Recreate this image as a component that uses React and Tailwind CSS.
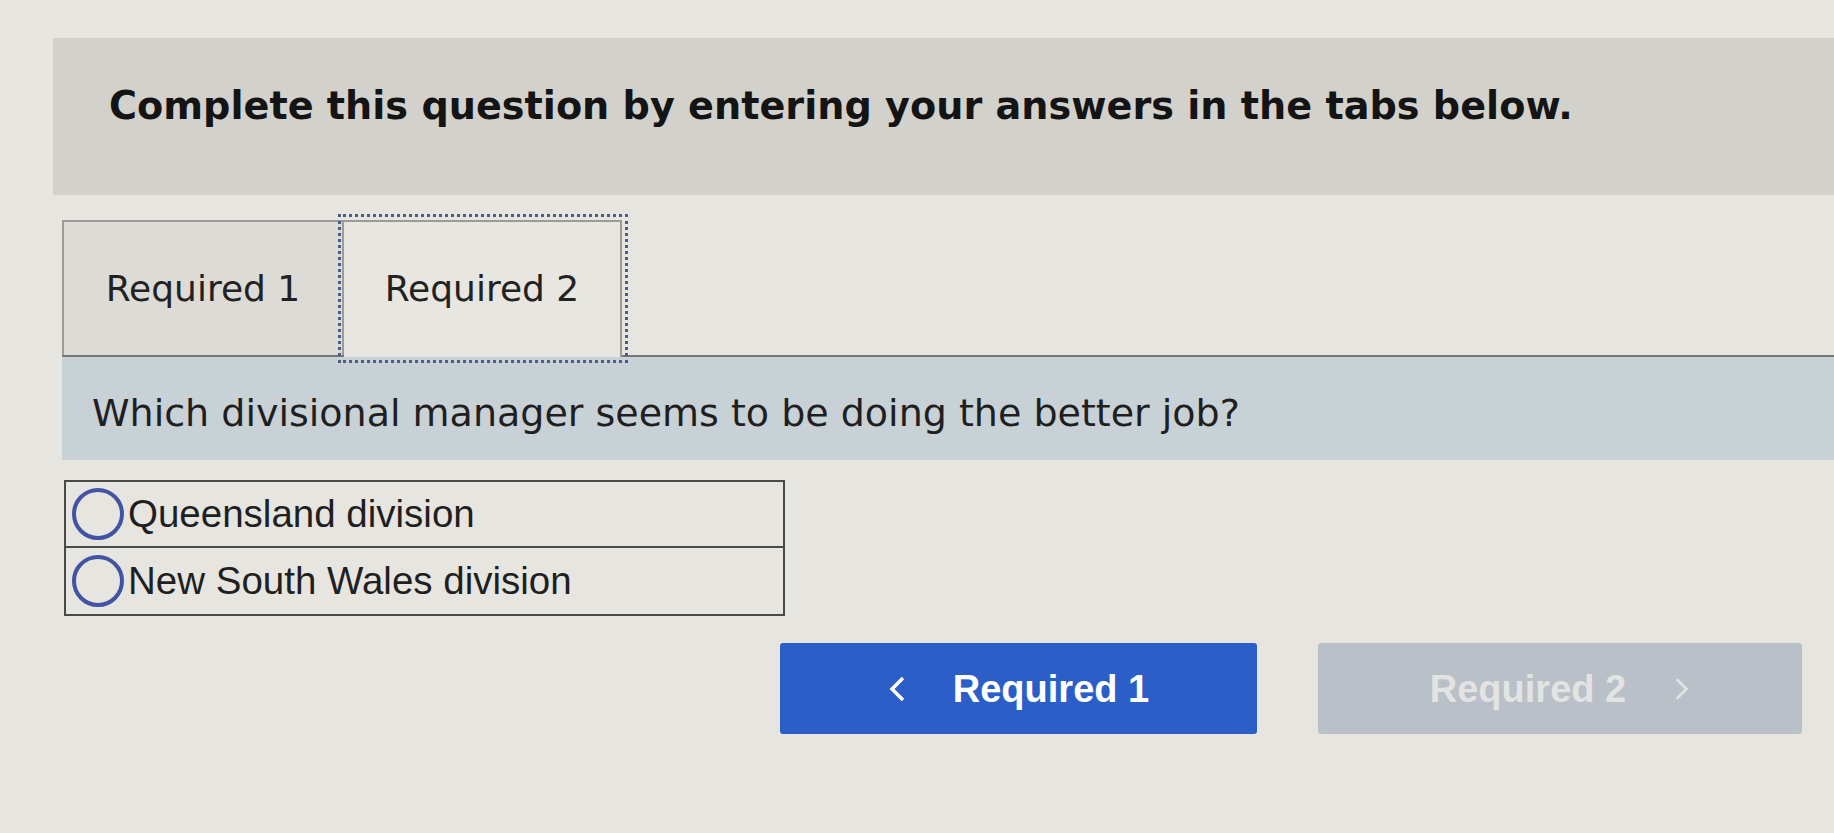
import React from "react";

const verdana = "font-['DejaVu_Sans',Verdana,sans-serif]";
const arial = "font-['Liberation_Sans',Arial,sans-serif]";

function Radio() {
    return (
        <span className="w-[52px] h-[52px] shrink-0 rounded-full border-[4px] border-[#4353a3]" />
    );
}

function Option({ label, last }) {
    return (
        <label
            className={[
                "flex items-center gap-[4px] h-[66px] pl-[6px]",
                last ? "" : "border-b-2 border-[#4a4a4a]",
            ].join(" ")}
        >
            <Radio />
            <span className={`${arial} text-[38.5px] leading-none text-[#1f1f1f]`}>
                {label}
            </span>
        </label>
    );
}

export default function App() {
    return (
        <div className="w-[1834px] h-[833px] overflow-hidden bg-[#e7e5e0] pt-[38px]">
            <div className="ml-[53px] h-[157px] bg-[#d2d1cc] pl-[56px] pt-[46px]">
                <h2
                    className={`${verdana} font-bold text-[38.2px] leading-[44px] text-[#141414] whitespace-nowrap`}
                >
                    Complete this question by entering your answers in the tabs below.
                </h2>
            </div>

            <div className="ml-[62px]">
                <div className="mt-[25px] flex border-b-2 border-[#777672]">
                    <button
                        className={`${verdana} w-[282px] h-[135px] border-2 border-b-0 border-[#9c9b97] bg-[#dddbd6] text-[36px] text-[#222]`}
                    >
                        Required 1
                    </button>
                    <button
                        className={`${verdana} w-[278px] h-[137px] -mb-[2px] border-2 border-l-0 border-b-0 border-[#9c9b97] bg-[#e8e6e1] text-[36px] text-[#222] outline-[3px] outline-dotted outline-[#4b5b8c] outline-offset-[3px] pb-[2px]`}
                    >
                        Required 2
                    </button>
                </div>

                <div className="h-[103px] bg-[#c8d1d6] pl-[30px] pt-[8px] flex items-center">
                    <p className={`${verdana} text-[38px] leading-none text-[#1f1f1f] whitespace-nowrap`}>
                        Which divisional manager seems to be doing the better job?
                    </p>
                </div>

                <div className="mt-[20px] ml-[2px] w-[721px] border-2 border-[#4a4a4a]">
                    <Option label="Queensland division" />
                    <Option label="New South Wales division" last />
                </div>

                <div className="mt-[27px] flex justify-end gap-[61px] pr-[32px]">
                    <button className="w-[477px] h-[91px] rounded-[3px] bg-[#2b5ec6] flex items-center justify-center gap-[47px] text-white">
                        <svg viewBox="0 0 18 26" className="w-[18px] h-[26px]" fill="none" stroke="currentColor" strokeWidth="3.5">
                            <path d="M15 2L4 13l11 11" />
                        </svg>
                        <span className={`${arial} font-bold text-[38px] leading-none`}>Required 1</span>
                    </button>
                    <button className="w-[484px] h-[91px] rounded-[3px] bg-[#b9c0c8] flex items-center justify-center gap-[48px] text-[#e2e3e2]">
                        <span className={`${arial} font-bold text-[38px] leading-none`}>Required 2</span>
                        <svg viewBox="0 0 18 26" className="w-[16px] h-[26px]" fill="none" stroke="currentColor" strokeWidth="3">
                            <path d="M3 2l11 11L3 24" />
                        </svg>
                    </button>
                </div>
            </div>
        </div>
    );
}
